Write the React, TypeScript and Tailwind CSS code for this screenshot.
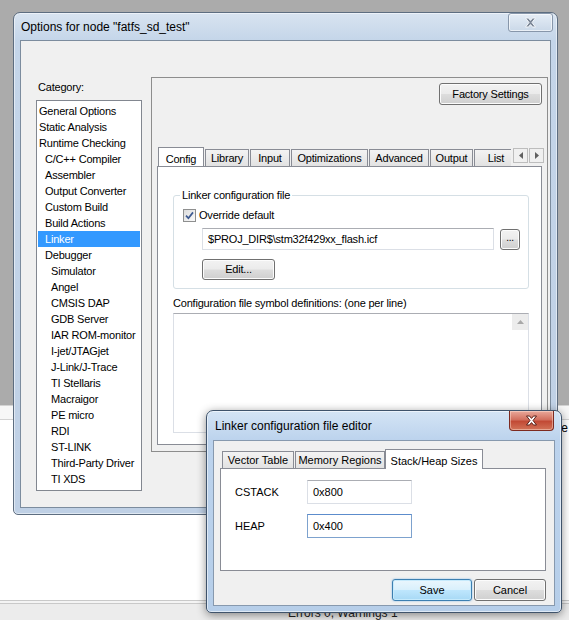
import type { ReactNode } from "react";

type Category = { label: string; depth: 0 | 1 | 2 };

const CATEGORIES: Category[] = [
  { label: "General Options", depth: 0 },
  { label: "Static Analysis", depth: 0 },
  { label: "Runtime Checking", depth: 0 },
  { label: "C/C++ Compiler", depth: 1 },
  { label: "Assembler", depth: 1 },
  { label: "Output Converter", depth: 1 },
  { label: "Custom Build", depth: 1 },
  { label: "Build Actions", depth: 1 },
  { label: "Linker", depth: 1 },
  { label: "Debugger", depth: 1 },
  { label: "Simulator", depth: 2 },
  { label: "Angel", depth: 2 },
  { label: "CMSIS DAP", depth: 2 },
  { label: "GDB Server", depth: 2 },
  { label: "IAR ROM-monitor", depth: 2 },
  { label: "I-jet/JTAGjet", depth: 2 },
  { label: "J-Link/J-Trace", depth: 2 },
  { label: "TI Stellaris", depth: 2 },
  { label: "Macraigor", depth: 2 },
  { label: "PE micro", depth: 2 },
  { label: "RDI", depth: 2 },
  { label: "ST-LINK", depth: 2 },
  { label: "Third-Party Driver", depth: 2 },
  { label: "TI XDS", depth: 2 },
];

const DEPTH_PAD = ["pl-[1px]", "pl-[7px]", "pl-[13px]"];

const LINKER_TABS = [
  { label: "Config", width: "w-[46px]" },
  { label: "Library", width: "w-[44px]" },
  { label: "Input", width: "w-[40px]" },
  { label: "Optimizations", width: "w-[77px]" },
  { label: "Advanced", width: "w-[60px]" },
  { label: "Output", width: "w-[43px]" },
  { label: "List", width: "w-[44px]" },
];

const EDITOR_TABS = [
  { label: "Vector Table", width: "w-[72px]" },
  { label: "Memory Regions", width: "w-[90px]" },
  { label: "Stack/Heap Sizes", width: "w-[98px]" },
];

function Button({ children, className = "" }: { children: ReactNode; className?: string }) {
  return (
    <div
      className={`flex items-center justify-center rounded-[3px] border border-[#707070] bg-[linear-gradient(to_bottom,#f2f2f2_0%,#ebebeb_48%,#dddddd_52%,#cfcfcf_100%)] text-black shadow-[inset_0_0_0_1px_#fcfcfc] ${className}`}
    >
      {children}
    </div>
  );
}

function TextBox({ value, focused = false, className = "" }: { value: string; focused?: boolean; className?: string }) {
  return (
    <div
      className={`flex items-center border bg-white pl-[5px] ${
        focused
          ? "border-[#7da2ce] border-t-[#5c8ccc]"
          : "border-[#dbdfe6] border-t-[#abadb3]"
      } ${className}`}
    >
      {value}
    </div>
  );
}

function Tab({ label, width, active }: { label: string; width: string; active: boolean }) {
  return active ? (
    <div
      className={`relative z-10 -mb-px flex shrink-0 items-start justify-center border border-b-0 border-[#898c95] bg-white pt-[3px] ${width}`}
    >
      {label}
    </div>
  ) : (
    <div
      className={`flex shrink-0 items-center justify-center border border-b-0 border-[#898c95] bg-[linear-gradient(to_bottom,#f3f3f3,#e2e2e2)] ${width}`}
    >
      {label}
    </div>
  );
}

function CheckBox() {
  return (
    <div className="flex h-[13px] w-[13px] items-center justify-center border border-[#8e8f8f] bg-[linear-gradient(135deg,#dcdcdc,#fbfbfb)]">
      <svg width="9" height="9" viewBox="0 0 9 9">
        <path d="M1 4.6 L3.4 7.2 L8 1.4" fill="none" stroke="#3d5a91" strokeWidth="1.7" />
      </svg>
    </div>
  );
}

function CloseGlyph({ fill, edge }: { fill: string; edge: string }) {
  return (
    <svg width="13" height="11" viewBox="0 0 13 11">
      <path
        d="M1.5 1 H4.5 L6.5 3.4 L8.5 1 H11.5 L8 5.5 L11.5 10 H8.5 L6.5 7.6 L4.5 10 H1.5 L5 5.5 Z"
        fill={fill}
        stroke={edge}
        strokeWidth="1"
        strokeLinejoin="round"
      />
    </svg>
  );
}

function ArrowButton({ dir }: { dir: "left" | "right" }) {
  return (
    <div className="flex h-[15px] w-[15px] items-center justify-center border border-[#bdbdbd] bg-[#f0f0f0]">
      <svg width="4" height="7" viewBox="0 0 4 7">
        <path d={dir === "left" ? "M4 0 V7 L0 3.5 Z" : "M0 0 V7 L4 3.5 Z"} fill="#606060" />
      </svg>
    </div>
  );
}

function OptionsDialog() {
  return (
    <div className="absolute left-[13px] top-[12px] flex h-[503px] w-[545px] flex-col rounded-t-[7px] rounded-b-[5px] border border-[#5d6d80] bg-[linear-gradient(to_bottom,#d8e3f0,#c4d5e9_28px,#bfd0e5)] px-[6px] pb-[6px] shadow-[inset_0_0_0_1px_rgba(255,255,255,0.5)]">
      <div className="relative flex h-[27px] shrink-0 items-center pl-[1px] text-[12px] text-black">
        Options for node "fatfs_sd_test"
        <div className="absolute right-[-2px] top-[0px] flex h-[19px] w-[45px] items-center justify-center rounded-[3px] border border-[#8796aa] bg-[linear-gradient(to_bottom,#e5edf6,#cad8e8)] shadow-[inset_0_0_0_1px_rgba(255,255,255,0.6)]">
          <CloseGlyph fill="#7d8898" edge="#f4f7fb" />
        </div>
      </div>

      <div className="flex flex-1 border border-[#7c8c9e] bg-[#f0f0f0] pl-[15px] pt-[36px] text-[11px] tracking-[-0.2px] text-black">
        {/* category tree */}
        <div className="flex flex-col">
          <div className="h-[23px] pl-[2px] leading-[21px]">Category:</div>
          <div className="h-[391px] w-[106px] border border-[#828790] bg-white pt-[2px]">
            {CATEGORIES.map((c) => (
              <div
                key={c.label}
                className={`mx-px h-[16px] whitespace-nowrap leading-[16px] ${DEPTH_PAD[c.depth]} ${
                  c.label === "Linker" ? "bg-[#3399ff] text-white" : ""
                }`}
              >
                {c.label}
              </div>
            ))}
          </div>
        </div>

        {/* linker options panel */}
        <div className="ml-[9px] flex h-[375px] w-[397px] flex-col border border-[#8d8d8d] px-[5px] pt-[5px]">
          <div className="flex justify-end">
            <Button className="h-[22px] w-[103px]">Factory Settings</Button>
          </div>

          <div className="mt-[40px] flex h-[21px] items-end pl-px">
            <div className="flex h-full flex-1 items-end overflow-hidden">
              {LINKER_TABS.map((t, i) => (
                <div key={t.label} className={`flex h-full items-end ${i === 0 ? "" : "ml-px"}`}>
                  <div className={`flex items-end ${i === 0 ? "h-[22px]" : "h-[18px]"}`}>
                    <Tab label={t.label} width={t.width} active={i === 0} />
                  </div>
                </div>
              ))}
            </div>
            <div className="mb-[3px] ml-[2px] mr-[-2px] flex gap-px self-end">
              <ArrowButton dir="left" />
              <ArrowButton dir="right" />
            </div>
          </div>

          <div className="h-[279px] border border-[#898c95] bg-white">
            <div className="relative ml-[15px] mt-[28px] h-[94px] w-[356px] rounded-[3px] border border-[#d5dfe5]">
              <div className="absolute left-[6px] top-[-8px] bg-white px-[2px] leading-[14px]">
                Linker configuration file
              </div>
              <div className="ml-[9px] mt-[13px] flex h-[13px] items-center">
                <CheckBox />
                <span className="ml-[3px]">Override default</span>
              </div>
              <div className="ml-[28px] mt-[6px] flex items-center">
                <TextBox value="$PROJ_DIR$\stm32f429xx_flash.icf" className="h-[22px] w-[292px]" />
                <Button className="ml-[6px] h-[21px] w-[20px] pb-[4px] text-[10px]">...</Button>
              </div>
              <Button className="ml-[28px] mt-[9px] h-[21px] w-[73px]">Edit...</Button>
            </div>

            <div className="ml-[15px] mt-[7px] h-[14px] leading-[14px]">
              Configuration file symbol definitions: (one per line)
            </div>
            <div className="ml-[15px] mt-[3px] flex h-[120px] w-[356px] justify-end border border-[#dbdfe6] border-t-[#abadb3] bg-white">
              <div className="flex h-[16px] w-[16px] items-center justify-center bg-[#ececec]">
                <svg width="7" height="4" viewBox="0 0 7 4">
                  <path d="M0 4 L3.5 0 L7 4 Z" fill="#a8a8a8" />
                </svg>
              </div>
            </div>
          </div>
        </div>
      </div>
    </div>
  );
}

function EditorDialog() {
  return (
    <div className="absolute left-[206px] top-[410px] flex h-[203px] w-[356px] flex-col rounded-t-[7px] rounded-b-[5px] border border-[#3f536b] bg-[linear-gradient(to_bottom,#d4e4f5,#bcd3ed_29px,#b6cee9)] px-[6px] pb-[6px] shadow-[0_2px_10px_rgba(0,0,0,0.45),inset_0_0_0_1px_rgba(255,255,255,0.55)]">
      <div className="relative flex h-[29px] shrink-0 items-center pl-[2px] text-[12px] text-black">
        Linker configuration file editor
        <div className="absolute right-[1px] top-[0px] flex h-[20px] w-[45px] items-center justify-center rounded-b-[4px] border border-t-0 border-[#7d2a20] bg-[linear-gradient(to_bottom,#e9a99b,#d2705f_45%,#c24a35_55%,#d27358)] shadow-[inset_0_0_0_1px_rgba(255,230,220,0.45)]">
          <CloseGlyph fill="#ffffff" edge="#5a2018" />
        </div>
      </div>

      <div className="flex flex-1 flex-col border border-[#8799ae] bg-[#f0f0f0] pl-[6px] pr-[8px] pt-[7px] text-[11px] text-black">
        <div className="flex h-[20px] items-end pl-[2px]">
          {EDITOR_TABS.map((t, i) => {
            const active = i === EDITOR_TABS.length - 1;
            return (
              <div key={t.label} className={`flex items-end ${active ? "-ml-px h-[21px]" : "mr-px h-[17px]"}`}>
                <Tab label={t.label} width={t.width} active={active} />
              </div>
            );
          })}
        </div>

        <div className="flex h-[103px] flex-col gap-[10px] border border-[#898c95] bg-white pl-[14px] pt-[11px]">
          <div className="flex items-center">
            <span className="w-[72px]">CSTACK</span>
            <TextBox value="0x800" className="h-[24px] w-[105px]" />
          </div>
          <div className="flex items-center">
            <span className="w-[72px]">HEAP</span>
            <TextBox value="0x400" focused className="h-[24px] w-[105px]" />
          </div>
        </div>

        <div className="mt-[8px] flex justify-end gap-[2px]">
          <div className="flex h-[22px] w-[80px] items-center justify-center rounded-[3px] border border-[#3c7fb1] bg-[linear-gradient(to_bottom,#eaf6fd_0%,#d9f0fc_48%,#bee6fd_52%,#a7d9f5_100%)] shadow-[0_0_2px_rgba(80,160,230,0.7),inset_0_0_0_1px_#c6eafc]">
            Save
          </div>
          <Button className="h-[22px] w-[72px]">Cancel</Button>
        </div>
      </div>
    </div>
  );
}

export default function App() {
  return (
    <div className="relative h-[620px] w-[569px] overflow-hidden font-['Liberation_Sans',Arial,sans-serif]">
      {/* application behind the dialogs */}
      <div className="flex h-full flex-col">
        <div className="h-[405px] bg-[#ababab]" />
        <div className="h-[15px] border-y border-[#d3d3d3] bg-[#f7f7f7]" />
        <div className="flex flex-1 flex-col bg-white">
          <div className="flex justify-end pr-px text-[12px] leading-[16px] text-black">e</div>
        </div>
        <div className="h-[4px] border-y border-[#c9c9c9] bg-[#f4f4f4]" />
        <div className="h-[16px] bg-[#ececec] pl-[288px] text-[12px] leading-[18px] text-[#222]">
          Errors 0, Warnings 1
        </div>
      </div>

      <OptionsDialog />
      <EditorDialog />
    </div>
  );
}
